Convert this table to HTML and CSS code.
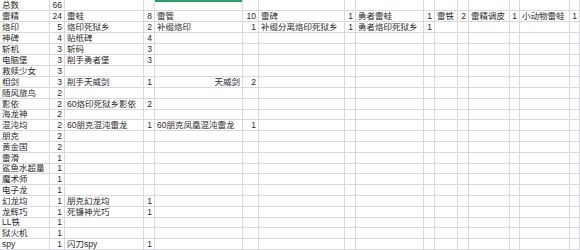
FILE: index.html
```html
<!DOCTYPE html>
<html lang="zh">
<head>
<meta charset="utf-8">
<title>Sheet</title>
<link rel="stylesheet" href="styles.css">
</head>
<body>
<div class="sheet">
  <span>总数</span><span class="n">66</span><span></span><span></span><span class="sel"></span><span></span><span></span><span></span><span></span><span></span><span></span><span></span><span></span><span></span><span></span><span></span>
  <span>雷精</span><span class="n">24</span><span>雷蛙</span><span class="n">8</span><span>雷管</span><span class="n">10</span><span>雷碑</span><span class="n">1</span><span>勇者雷蛙</span><span class="n">1</span><span>雷铁</span><span class="n">2</span><span>雷精调皮</span><span class="n">1</span><span>小动物雷蛙</span><span class="n">1</span>
  <span>烙印</span><span class="n">5</span><span>烙印死狱乡</span><span class="n">2</span><span>补缀烙印</span><span class="n">1</span><span>补缀分离烙印死狱乡</span><span class="n">1</span><span>勇者烙印死狱乡</span><span class="n">1</span><span></span><span></span><span></span><span></span><span></span><span></span>
  <span>神碑</span><span class="n">4</span><span>贴纸碑</span><span class="n">4</span><span></span><span></span><span></span><span></span><span></span><span></span><span></span><span></span><span></span><span></span><span></span><span></span>
  <span>斩机</span><span class="n">3</span><span>斩码</span><span class="n">3</span><span></span><span></span><span></span><span></span><span></span><span></span><span></span><span></span><span></span><span></span><span></span><span></span>
  <span>电脑堡</span><span class="n">3</span><span>削手勇者堡</span><span class="n">3</span><span></span><span></span><span></span><span></span><span></span><span></span><span></span><span></span><span></span><span></span><span></span><span></span>
  <span>救赎少女</span><span class="n">3</span><span></span><span></span><span></span><span></span><span></span><span></span><span></span><span></span><span></span><span></span><span></span><span></span><span></span><span></span>
  <span>相剑</span><span class="n">3</span><span>削手天威剑</span><span class="n">1</span><span class="n">天威剑</span><span class="n">2</span><span></span><span></span><span></span><span></span><span></span><span></span><span></span><span></span><span></span><span></span>
  <span>随风旅鸟</span><span class="n">2</span><span></span><span></span><span></span><span></span><span></span><span></span><span></span><span></span><span></span><span></span><span></span><span></span><span></span><span></span>
  <span>影依</span><span class="n">2</span><span>60烙印死狱乡影依</span><span class="n">2</span><span></span><span></span><span></span><span></span><span></span><span></span><span></span><span></span><span></span><span></span><span></span><span></span>
  <span>海龙神</span><span class="n">2</span><span></span><span></span><span></span><span></span><span></span><span></span><span></span><span></span><span></span><span></span><span></span><span></span><span></span><span></span>
  <span>混沌均</span><span class="n">2</span><span>60朋克混沌雷龙</span><span class="n">1</span><span>60朋克凤凰混沌雷龙</span><span class="n">1</span><span></span><span></span><span></span><span></span><span></span><span></span><span></span><span></span><span></span><span></span>
  <span>朋克</span><span class="n">2</span><span></span><span></span><span></span><span></span><span></span><span></span><span></span><span></span><span></span><span></span><span></span><span></span><span></span><span></span>
  <span>黄金国</span><span class="n">2</span><span></span><span></span><span></span><span></span><span></span><span></span><span></span><span></span><span></span><span></span><span></span><span></span><span></span><span></span>
  <span>雷滑</span><span class="n">1</span><span></span><span></span><span></span><span></span><span></span><span></span><span></span><span></span><span></span><span></span><span></span><span></span><span></span><span></span>
  <span>鲨鱼水超量</span><span class="n">1</span><span></span><span></span><span></span><span></span><span></span><span></span><span></span><span></span><span></span><span></span><span></span><span></span><span></span><span></span>
  <span>魔术师</span><span class="n">1</span><span></span><span></span><span></span><span></span><span></span><span></span><span></span><span></span><span></span><span></span><span></span><span></span><span></span><span></span>
  <span>电子龙</span><span class="n">1</span><span></span><span></span><span></span><span></span><span></span><span></span><span></span><span></span><span></span><span></span><span></span><span></span><span></span><span></span>
  <span>幻龙均</span><span class="n">1</span><span>朋克幻龙均</span><span class="n">1</span><span></span><span></span><span></span><span></span><span></span><span></span><span></span><span></span><span></span><span></span><span></span><span></span>
  <span>龙辉巧</span><span class="n">1</span><span>死镰神光巧</span><span class="n">1</span><span></span><span></span><span></span><span></span><span></span><span></span><span></span><span></span><span></span><span></span><span></span><span></span>
  <span>LL铁</span><span class="n">1</span><span></span><span></span><span></span><span></span><span></span><span></span><span></span><span></span><span></span><span></span><span></span><span></span><span></span><span></span>
  <span>狱火机</span><span class="n">1</span><span></span><span></span><span></span><span></span><span></span><span></span><span></span><span></span><span></span><span></span><span></span><span></span><span></span><span></span>
  <span>spy</span><span class="n">1</span><span>闪刀spy</span><span class="n">1</span><span></span><span></span><span></span><span></span><span></span><span></span><span></span><span></span><span></span><span></span><span></span><span></span>
</div>
</body>
</html>
```

FILE: styles.css
```css
html, body {
  margin: 0;
  padding: 0;
  background: #ffffff;
  overflow: hidden;
}

.sheet {
  display: grid;
  grid-template-columns: 50px 15px 79px 11px 88px 16px 86px 11px 68px 11px 23px 11px 41px 10px 50px 10px;
  grid-template-rows: repeat(8, 11px) repeat(15, 10.8px);
  width: 580px;
  font-family: "Liberation Sans", "Noto Sans CJK SC", sans-serif;
  font-size: 8.5px;
  color: #2a2a2a;
}

.sheet > span {
  box-sizing: border-box;
  border-right: 1px solid #d8d8e2;
  border-bottom: 1px solid #d8d8e2;
  padding: 0 1px 0 2px;
  display: flex;
  align-items: flex-end;
  line-height: 10px;
  white-space: nowrap;
  overflow: hidden;
}

.sheet > span.n {
  justify-content: flex-end;
  padding: 0 2px 0 0;
}

.sheet > span.sel {
  box-shadow: inset 0 2px 0 #21a366;
}
```
